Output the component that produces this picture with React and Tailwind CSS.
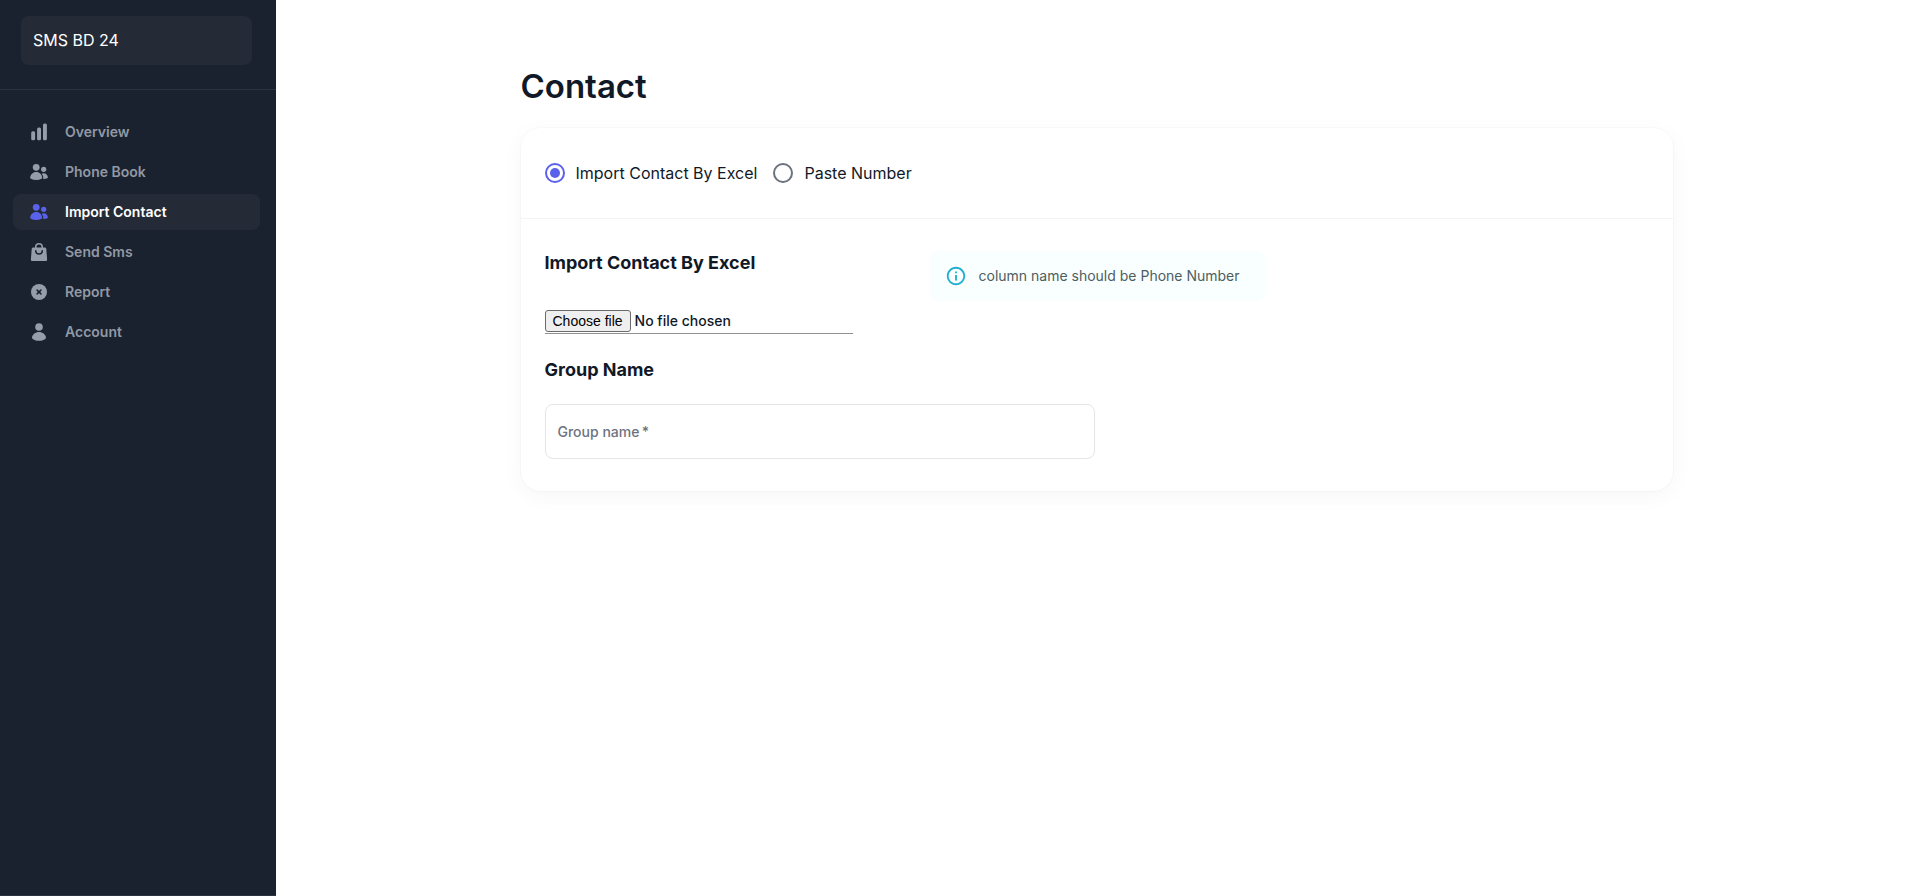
import React, { useRef, useState } from "react";

const ChartBarIcon = () => (
  <svg className="size-5" viewBox="0 0 20 20" fill="currentColor">
    <rect x="2.2" y="9.3" width="3.900" height="8.900" rx="1.500" />
    <rect x="8.100" y="5.400" width="3.900" height="12.800" rx="1.500" />
    <rect x="14" y="1.600" width="3.900" height="16.600" rx="1.500" />
  </svg>
);

const UsersIcon = () => (
  <svg className="size-5" viewBox="0 0 20 20" fill="currentColor">
    <circle cx="7.2" cy="5.3" r="3.4" />
    <circle cx="14.7" cy="7.3" r="2.6" />
    <path d="M7.2 10C3.8 10 1.400 12.600 1.200 15.600c0 .5.200.9.600 1.200 1.600.8 3.500 1.200 5.400 1.200s3.800-.4 5.400-1.200c.4-.3.600-.7.600-1.200C13 12.600 10.600 10 7.200 10z" />
    <path d="M14.200 17h.5c1.300 0 2.500-.3 3.600-.8.4-.2.600-.5.600-.9-.1-2.200-2-4.100-4.200-4.100-.7 0-1.400.2-2 .5 1.200 1.400 1.900 3.300 1.500 5.300z" />
  </svg>
);

const ShoppingBagIcon = () => (
  <svg className="size-5" viewBox="0 0 20 20" fill="currentColor">
    <path
      fillRule="evenodd"
      clipRule="evenodd"
      d="M6 5.500V5a4 4 0 1 1 8 0v.5h1.700c.8 0 1.500.6 1.600 1.400l.8 10.300c.1 1-.6 1.800-1.600 1.800h-13c-1 0-1.700-.8-1.600-1.800l.8-10.300c.1-.8.800-1.400 1.600-1.400H6zm1.500 0h5V5a2.500 2.500 0 0 0-5 0v.5zm0 3.300a.75.75 0 0 0-1.500 0 4 4 0 0 0 8 0 .75.75 0 0 0-1.500 0 2.500 2.500 0 0 1-5 0z"
    />
  </svg>
);

const XCircleIcon = () => (
  <svg className="size-5" viewBox="0 0 20 20" fill="currentColor">
    <circle cx="10" cy="10" r="8" />
    <path
      d="M8.100 8.100l3.800 3.800M11.900 8.100l-3.800 3.800"
      stroke="#1b222f"
      strokeWidth="1.500"
      strokeLinecap="round"
    />
  </svg>
);

const UserIcon = () => (
  <svg className="size-5" viewBox="0 0 20 20" fill="currentColor">
    <circle cx="10" cy="5" r="3.800" />
    <path d="M10 10c-3.600 0-6.500 2.400-7 5.500-.1.600.2 1.100.7 1.400C5.500 18.200 7.700 18.800 10 18.800s4.500-.6 6.300-1.900c.5-.3.800-.8.7-1.400-.5-3.100-3.400-5.500-7-5.500z" />
  </svg>
);

const InfoIcon = () => (
  <svg className="size-[22px]" viewBox="0 0 24 24" fill="currentColor">
    <path d="M11 7h2v2h-2zm0 4h2v6h-2zm1-9C6.480 2 2 6.480 2 12s4.480 10 10 10 10-4.480 10-10S17.520 2 12 2zm0 18c-4.410 0-8-3.590-8-8s3.590-8 8-8 8 3.590 8 8-3.590 8-8 8z" />
  </svg>
);

const navItems = [
  { title: "Overview", icon: <ChartBarIcon /> },
  { title: "Phone Book", icon: <UsersIcon /> },
  { title: "Import Contact", icon: <UsersIcon />, active: true },
  { title: "Send Sms", icon: <ShoppingBagIcon /> },
  { title: "Report", icon: <XCircleIcon /> },
  { title: "Account", icon: <UserIcon /> },
];

const SideNav = () => {
  return (
    <aside className="w-[276px] shrink-0 bg-[#1b222f] text-white flex flex-col border-b border-[#2d3340]">
      <div className="pt-4 pb-6 pl-[21px] pr-6 border-b border-[#2d3340]">
        <div className="rounded-lg bg-[#242b36] px-3 py-3 leading-[25px]">
          SMS BD 24
        </div>
      </div>
      <nav className="pt-6 pl-[13px] pr-4">
        <ul className="flex flex-col gap-1">
          {navItems.map((item) => (
            <li key={item.title}>
              <a
                href="#"
                className={`flex items-center gap-4 h-9 px-4 rounded-lg text-sm font-semibold ${
                  item.active ? "bg-[#242b36] text-white" : "text-[#9199a5]"
                }`}
              >
                <span className={item.active ? "text-[#5a61eb]" : "text-[#969daa]"}>
                  {item.icon}
                </span>
                {item.title}
              </a>
            </li>
          ))}
        </ul>
      </nav>
    </aside>
  );
};

const RadioOption = ({ label, value, selected, onChange }) => {
  return (
    <label className="flex items-center gap-[11px] text-base cursor-pointer">
      <input
        type="radio"
        name="importType"
        value={value}
        checked={selected === value}
        onChange={() => onChange(value)}
        className="appearance-none size-5 rounded-full border-2 border-[#6c737f] grid place-content-center checked:border-[#5a61eb] before:size-[10px] before:rounded-full checked:before:bg-[#5a61eb]"
      />
      {label}
    </label>
  );
};

const FileInput = () => {
  const inputRef = useRef(null);
  const [fileName, setFileName] = useState("");

  return (
    <div className="w-[308px] max-w-full flex items-center gap-1 pb-px border-b border-[#8f9195] text-sm leading-[22px] font-medium">
      <input
        ref={inputRef}
        type="file"
        accept=".xlsx,.xls"
        aria-label="Excel file"
        className="hidden"
        onChange={(e) => setFileName(e.target.files[0]?.name || "")}
      />
      <button
        type="button"
        onClick={() => inputRef.current.click()}
        className="h-[22px] px-[7px] rounded-[3px] border border-[#6b6b6b] bg-[#efefef] text-black font-normal font-['Liberation_Sans',sans-serif] leading-5"
      >
        Choose file
      </button>
      <span>{fileName || "No file chosen"}</span>
    </div>
  );
};

const ImportCard = () => {
  const [importType, setImportType] = useState("excel");

  return (
    <div className="bg-white rounded-[20px] shadow-[0_5px_22px_rgba(0,0,0,0.04),0_0_0_1px_rgba(0,0,0,0.02)]">
      <div className="flex flex-wrap items-center gap-4 px-6 h-[91px] border-b border-[#f2f4f7]">
        <RadioOption
          label="Import Contact By Excel"
          value="excel"
          selected={importType}
          onChange={setImportType}
        />
        <RadioOption
          label="Paste Number"
          value="paste"
          selected={importType}
          onChange={setImportType}
        />
      </div>
      <form className="px-6 py-8">
        <div className="grid grid-cols-3 gap-12">
          <h2 className="text-lg leading-6 font-bold">Import Contact By Excel</h2>
          <div className="flex items-center gap-3 rounded-lg bg-[#f9ffff] px-4 h-[50px] text-sm text-[#4e5d60]">
            <span className="text-[#22aed1]">
              <InfoIcon />
            </span>
            column name should be Phone Number
          </div>
        </div>
        <div className="pt-[9px]">
          <FileInput />
        </div>
        <h2 className="mt-6 text-lg leading-6 font-bold">Group Name</h2>
        <input
          type="text"
          required
          aria-label="Group name"
          placeholder="Group name&#8201;*"
          className="mt-[22px] block w-full max-w-[550px] h-[55px] px-3 rounded-lg border border-[#e3e5e9] text-sm font-medium placeholder:text-[#6c737f] outline-none focus:border-[#5a61eb]"
        />
      </form>
    </div>
  );
};

const App = () => {
  return (
    <div className="min-h-screen flex bg-white text-[#111927] font-['Inter',sans-serif]">
      <SideNav />
      <main className="flex-1">
        <div className="max-w-[1200px] mx-auto px-6 pt-16">
          <h1 className="text-[33px] leading-[44px] font-semibold mb-5">Contact</h1>
          <ImportCard />
        </div>
      </main>
    </div>
  );
};

export default App;
